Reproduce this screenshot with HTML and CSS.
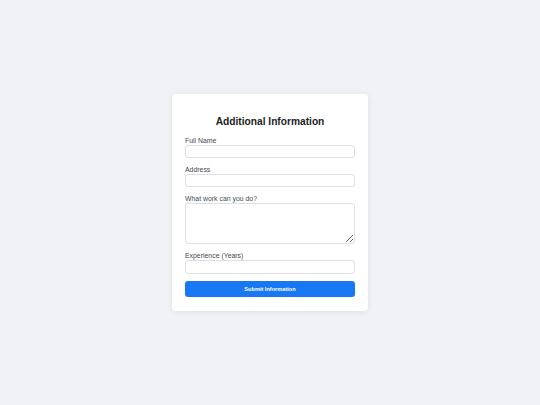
FILE: index.html
```html
<!DOCTYPE html>
<html lang="en">
<head>
    <meta charset="UTF-8">
    <meta name="viewport" content="width=device-width, initial-scale=1.0">
    <title>Additional Information</title>
    <link rel="stylesheet" href="styles.css">
</head>
<body>
    <div class="card">
        <!--标题-->
        <h2 class="title">Additional Information</h2>
        <form class="form">
            <div class="field">
                <label for="name">Full Name</label>
                <input type="text" id="name">
            </div>
            <div class="field">
                <label for="address">Address</label>
                <input type="text" id="address">
            </div>
            <div class="field">
                <label for="work">What work can you do?</label>
                <textarea id="work"></textarea>
            </div>
            <div class="field">
                <label for="exp">Experience (Years)</label>
                <input type="number" id="exp">
            </div>
            <button type="button" class="submit">Submit Information</button>
        </form>
    </div>
</body>
</html>
```

FILE: styles.css
```css
*{
    margin: 0;
    padding: 0;
    box-sizing: border-box;
}

html, body{
    height: 100%;
}

body{
    background-color: #f0f2f5;
    font-family: "Liberation Sans", Arial, sans-serif;

    /*居中*/
    display: flex;
    justify-content: center;
    align-items: center;
}

.card{
    width: 196px;
    padding: 13px 13px 14px;
    background-color: #fff;
    border-radius: 4px;
    box-shadow: 0 1px 6px rgba(0, 0, 0, 0.08);
}

.title{
    margin: 8px 0 8px;
    text-align: center;
    font-size: 10.2px;
    font-weight: bold;
    color: #1c1e21;
    line-height: 13px;
}

.field{
    margin-bottom: 6.5px;
}

.field label{
    display: block;
    font-size: 6.9px;
    line-height: 9px;
    color: #444950;
}

.field input,
.field textarea{
    display: block;
    width: 100%;
    height: 13.6px;
    border: 1px solid #dddfe2;
    border-radius: 3px;
    background-color: #fff;
    font-family: inherit;
    font-size: 6.6px;
    outline: none;
}

.field textarea{
    height: 41.7px;
    resize: vertical;
}

.submit{
    display: block;
    width: 100%;
    height: 16.3px;
    margin-top: 7.5px;
    border: none;
    border-radius: 3px;
    background-color: #1877f2;
    color: #fff;
    font-family: inherit;
    font-size: 5.6px;
    font-weight: bold;
}
```
